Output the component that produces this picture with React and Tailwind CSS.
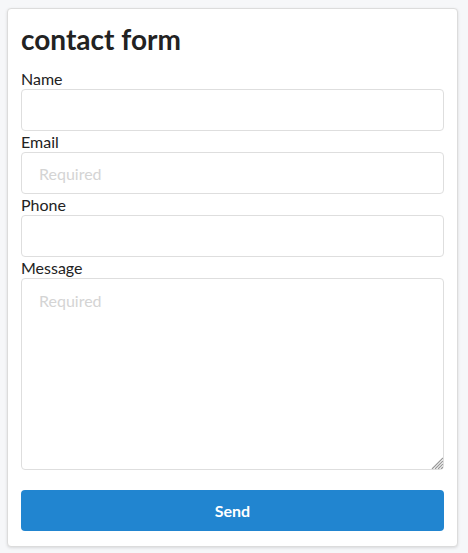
export default function App() {
  return (
    <div className="min-h-[553px] bg-[#f6f7f9] pt-[8px] px-[7px] pb-[7px]" style={{ fontFamily: "Lato, 'Noto Sans', sans-serif" }}>
      <div className="w-[451px] rounded-[4px] border border-[#dcdcdc] bg-white px-[13px] pt-[12px] pb-[15px] shadow-[0_1px_3px_rgba(0,0,0,0.12)]">
        <h1 className="text-[28px] font-bold leading-[36px] text-[#222]">contact form</h1>
        <form className="mt-[11px]" onSubmit={(e) => e.preventDefault()}>
          <label className="block text-[16px] leading-[21px] text-[#222]">Name</label>
          <input className="block h-[42px] w-full rounded-[4px] border border-[#dedede] px-[17px] text-[16px] outline-none placeholder:text-[#d4d4d4]" />
          <label className="block text-[16px] leading-[21px] text-[#222]">Email</label>
          <input className="block h-[42px] w-full rounded-[4px] border border-[#dedede] px-[17px] text-[16px] outline-none placeholder:text-[#d4d4d4]" placeholder="Required" />
          <label className="block text-[16px] leading-[21px] text-[#222]">Phone</label>
          <input className="block h-[42px] w-full rounded-[4px] border border-[#dedede] px-[17px] text-[16px] outline-none placeholder:text-[#d4d4d4]" />
          <label className="block text-[16px] leading-[21px] text-[#222]">Message</label>
          <div className="relative">
            <textarea className="block h-[192px] w-full resize-none rounded-[4px] border border-[#dedede] px-[17px] pt-[10px] pb-[11px] text-[16px] outline-none placeholder:text-[#d4d4d4]" placeholder="Required" />
            <svg className="pointer-events-none absolute bottom-[1px] right-[1px]" width="12" height="12" viewBox="0 0 12 12">
              <path d="M12 1 L1 12 M12 4 L4 12 M12 7 L7 12 M12 10 L10 12" stroke="#999" strokeWidth="1.2" />
            </svg>
          </div>
          <button type="submit" className="mt-[20px] block h-[41px] w-full rounded-[4px] bg-[#2185d0] text-[16px] font-bold text-white">
            Send
          </button>
        </form>
      </div>
    </div>
  );
}
